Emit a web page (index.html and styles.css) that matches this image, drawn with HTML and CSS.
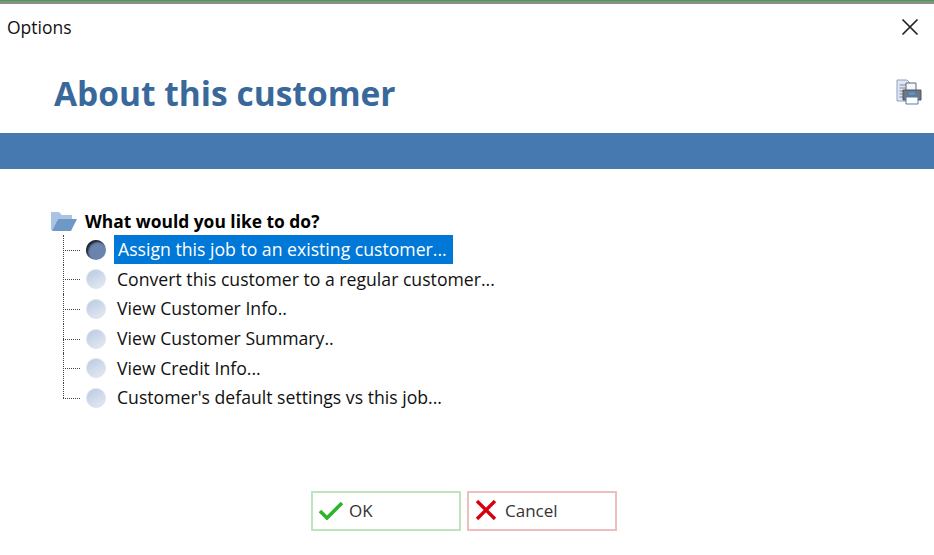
FILE: index.html
```html
<!DOCTYPE html>
<html lang="en">
<head>
    <meta charset="UTF-8">
    <meta name="viewport" content="width=device-width, initial-scale=1.0">
    <title>Options</title>
    <link rel="stylesheet" href="styles.css">
</head>
<body>
    <div class="window">
        <div class="title-bar">
            <span class="title-text">Options</span>
            <svg class="close-icon" width="18" height="18" viewBox="0 0 18 18">
                <path d="M1.5 1.5 L16.5 16.5 M16.5 1.5 L1.5 16.5" stroke="#222" stroke-width="1.7" fill="none"/>
            </svg>
        </div>

        <div class="header">
            <h1>About this customer</h1>
            <svg class="print-icon" width="26" height="26" viewBox="0 0 26 26">
                <path d="M1 1 H11 L15 5 V22 H1 Z" fill="#dfe6f2" stroke="#8fa2c4"/>
                <path d="M3.5 6 H11 M3.5 9 H10 M3.5 12 H8 M3.5 15 H7 M3.5 18 H7" stroke="#7f8a9c"/>
                <path d="M10 4 H20 V12 H10 Z" fill="#f4f6f8" stroke="#5f6a78"/>
                <path d="M7 11 H25 V21 H7 Z" fill="#6d7884" stroke="#4c5661"/>
                <path d="M10 18 H22 V25 H10 Z" fill="#fff" stroke="#4f7fb0"/>
                <path d="M13 14.5 H19" stroke="#3f9fee" stroke-width="2.4"/>
            </svg>
        </div>

        <div class="band"></div>

        <div class="tree">
            <div class="tree-root">
                <svg class="folder-icon" width="28" height="22" viewBox="0 0 28 22">
                    <path d="M1 20 V2 H9 L12 5 H22 V9 H8 L3 20 Z" fill="#a9c4e2"/>
                    <path d="M2 21 L8 9 H27 L21 21 Z" fill="#6f98c6"/>
                </svg>
                <span>What would you like to do?</span>
            </div>
            <ul class="tree-list">
                <li class="tree-item">
                    <span class="radio selected"></span>
                    <span class="label highlight">Assign this job to an existing customer...</span>
                </li>
                <li class="tree-item">
                    <span class="radio"></span>
                    <span class="label">Convert this customer to a regular customer...</span>
                </li>
                <li class="tree-item">
                    <span class="radio"></span>
                    <span class="label">View Customer Info..</span>
                </li>
                <li class="tree-item">
                    <span class="radio"></span>
                    <span class="label">View Customer Summary..</span>
                </li>
                <li class="tree-item">
                    <span class="radio"></span>
                    <span class="label">View Credit Info...</span>
                </li>
                <li class="tree-item">
                    <span class="radio"></span>
                    <span class="label">Customer's default settings vs this job...</span>
                </li>
            </ul>
        </div>

        <div class="actions">
            <button class="btn btn-ok">
                <svg width="26" height="20" viewBox="0 0 26 20">
                    <path d="M2 11 L9 18 L24 3" stroke="#2db52d" stroke-width="3.6" fill="none"/>
                </svg>
                OK
            </button>
            <button class="btn btn-cancel">
                <svg width="22" height="20" viewBox="0 0 22 20">
                    <path d="M2 1 L20 19 M20 1 L2 19" stroke="#d8000f" stroke-width="3.4" fill="none"/>
                </svg>
                Cancel
            </button>
        </div>
    </div>
</body>
</html>
```

FILE: styles.css
```css
:root {
    --blue: #4679b0;
    --title: #39699b;
    --select: #0078d7;
}

body {
    margin: 0;
    background-color: white;
    font-family: 'Open Sans', 'Noto Sans', sans-serif;
    color: #111;
}

.window {
    height: 555px;
    overflow: hidden;
    border-top: 1px solid #35a835;
    box-sizing: border-box;
}

.title-bar {
    display: flex;
    justify-content: space-between;
    align-items: center;
    height: 50px;
    padding: 0 15px 1px 7px;
    border-top: 3px solid #8c8c8c;
    box-sizing: border-box;
    font-size: 17.5px;
}

.header {
    display: flex;
    justify-content: space-between;
    align-items: center;
    height: 82px;
    padding: 2px 12px 0 54px;
    box-sizing: border-box;
}

.header h1 {
    margin: 0;
    font-size: 33.5px;
    font-weight: bold;
    color: var(--title);
}

.print-icon {
    margin-bottom: 3px;
}

.band {
    height: 36px;
    background-color: var(--blue);
}

.tree {
    padding: 37px 0 0 50px;
}

.tree-root {
    display: flex;
    align-items: center;
    gap: 7px;
    height: 29px;
    font-size: 17.4px;
    font-weight: bold;
    color: black;
}

.tree-list {
    list-style: none;
    margin: 0 0 0 13px;
    padding: 0;
}

.tree-item {
    display: flex;
    align-items: center;
    height: 29.6px;
    position: relative;
    padding-left: 23px;
    font-size: 17.65px;
}

.tree-item::before {
    content: "";
    position: absolute;
    left: 0;
    top: 0;
    bottom: 0;
    border-left: 1px dotted #444;
}

.tree-item::after {
    content: "";
    position: absolute;
    left: 0;
    top: 50%;
    width: 17px;
    border-top: 1px dotted #444;
}

.tree-item:last-child::before {
    bottom: 50%;
}

.radio {
    width: 20px;
    height: 20px;
    border-radius: 50%;
    flex-shrink: 0;
    background: linear-gradient(150deg, #b9c9e1, #e6ebf4);
    border: 1px solid #dde3ec;
    box-sizing: border-box;
}

.radio.selected {
    background: #6b84ae;
    border: none;
    box-shadow: inset 2px 2px 2px #20242c;
}

.label {
    margin-left: 9px;
    padding: 0 2px;
    line-height: 29px;
}

.highlight {
    margin-left: 8px;
    padding: 0 6px 0 4px;
    background-color: var(--select);
    color: white;
}

.actions {
    display: flex;
    gap: 6px;
    margin-top: 78px;
    padding-left: 311px;
}

.btn {
    display: flex;
    align-items: center;
    gap: 5px;
    width: 150px;
    height: 40px;
    padding: 0 0 1px 5px;
    background: white;
    border: 2px solid;
    font-family: inherit;
    font-size: 17px;
    color: #333;
    box-sizing: border-box;
}

.btn-ok {
    border-color: #bde5bd;
}

.btn-cancel {
    border-color: #efbcc0;
    padding-left: 6px;
    gap: 8px;
}
```
